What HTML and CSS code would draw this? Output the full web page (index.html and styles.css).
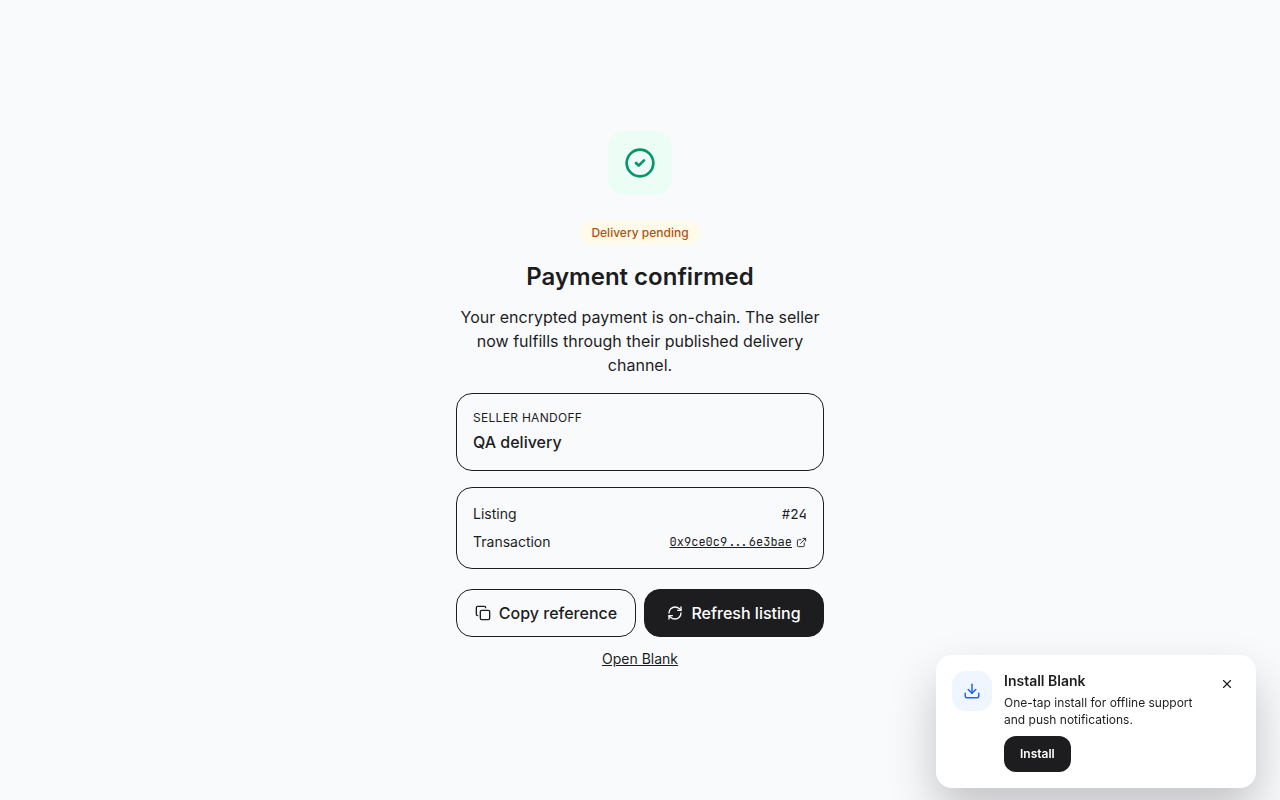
FILE: index.html
```html
<!DOCTYPE html>
<html lang="en">
  <head>
    <meta charset="UTF-8" />
    <meta name="viewport" content="width=device-width, initial-scale=1.0" />
    <title>Payment confirmed</title>
    <link rel="stylesheet" href="styles.css">
  </head>
  <body>
    <main class="page">
      <div class="receipt">
        <div class="status-icon">
          <svg class="icon" width="32" height="32" viewBox="0 0 24 24"><circle cx="12" cy="12" r="10" /><path d="m9 12 2 2 4-4" /></svg>
        </div>
        <span class="badge">Delivery pending</span>
        <h1>Payment confirmed</h1>
        <p class="lead">Your encrypted payment is on-chain. The seller now fulfills through their published delivery channel.</p>

        <section class="card">
          <p class="label">Seller handoff</p>
          <p class="value">QA delivery</p>
        </section>

        <dl class="card details">
          <div class="row">
            <dt>Listing</dt>
            <dd class="mono">#24</dd>
          </div>
          <div class="row">
            <dt>Transaction</dt>
            <dd>
              <a class="tx mono" href="#tx">
                <span>0x9ce0c9...6e3bae</span>
                <svg class="icon" width="11" height="11" viewBox="0 0 24 24"><path d="M15 3h6v6" /><path d="M10 14 21 3" /><path d="M18 13v6a2 2 0 0 1-2 2H5a2 2 0 0 1-2-2V8a2 2 0 0 1 2-2h6" /></svg>
              </a>
            </dd>
          </div>
        </dl>

        <div class="actions">
          <button type="button" class="btn">
            <svg class="icon" width="16" height="16" viewBox="0 0 24 24"><rect width="14" height="14" x="8" y="8" rx="2" /><path d="M4 16c-1.1 0-2-.9-2-2V4c0-1.1.9-2 2-2h10c1.1 0 2 .9 2 2" /></svg>
            Copy reference
          </button>
          <button type="button" class="btn btn-dark">
            <svg class="icon" width="16" height="16" viewBox="0 0 24 24"><path d="M3 12a9 9 0 0 1 9-9 9.75 9.75 0 0 1 6.74 2.74L21 8" /><path d="M21 3v5h-5" /><path d="M21 12a9 9 0 0 1-9 9 9.75 9.75 0 0 1-6.74-2.74L3 16" /><path d="M8 16H3v5" /></svg>
            Refresh listing
          </button>
        </div>
        <a class="home" href="#home">Open Blank</a>
      </div>
    </main>

    <!-- PWA install prompt -->
    <aside class="toast">
      <div class="toast-icon">
        <svg class="icon" width="18" height="18" viewBox="0 0 24 24"><path d="M21 15v4a2 2 0 0 1-2 2H5a2 2 0 0 1-2-2v-4" /><path d="m7 10 5 5 5-5" /><path d="M12 15V3" /></svg>
      </div>
      <div class="toast-body">
        <h2>Install Blank</h2>
        <p>One-tap install for offline support and push notifications.</p>
        <button type="button" class="install">Install</button>
      </div>
      <button type="button" class="close" aria-label="Dismiss">
        <svg class="icon" width="14" height="14" viewBox="0 0 24 24"><path d="M18 6 6 18" /><path d="m6 6 12 12" /></svg>
      </button>
    </aside>
  </body>
</html>
```
FILE: styles.css
```css
* {
  box-sizing: border-box;
  margin: 0;
}
body {
  font-family: Inter, "Liberation Sans", sans-serif;
  font-size: 16px;
  line-height: 24px;
  color: #1d1d1f;
  background: #f9fafc;
}
button {
  font: inherit;
  color: inherit;
  background: none;
  border: 0;
  cursor: pointer;
}
a {
  color: inherit;
}
.icon {
  flex: none;
  fill: none;
  stroke: currentColor;
  stroke-width: 2;
  stroke-linecap: round;
  stroke-linejoin: round;
}
.mono {
  font-family: "JetBrains Mono", "Liberation Mono", monospace;
}

.page {
  min-height: 100vh;
  display: flex;
  align-items: center;
  justify-content: center;
  padding: 24px;
}
.receipt {
  width: 100%;
  max-width: 368px;
  display: flex;
  flex-direction: column;
  align-items: center;
  text-align: center;
}
.status-icon {
  width: 64px;
  height: 64px;
  display: flex;
  align-items: center;
  justify-content: center;
  border-radius: 16px;
  color: #059669;
  background: #ecfdf5;
}
.badge {
  margin-top: 26px;
  padding: 4px 12px;
  border-radius: 12px;
  font-size: 12px;
  line-height: 16px;
  font-weight: 500;
  color: #b45309;
  background: #fffbeb;
}
h1 {
  margin-top: 16px;
  font-size: 24px;
  line-height: 32px;
  font-weight: 600;
}
.lead {
  margin-top: 12px;
}

.card {
  width: 100%;
  margin-top: 16px;
  padding: 16px;
  border: 1px solid #1d1d1f;
  border-radius: 16px;
  text-align: left;
}
.label {
  font-size: 12px;
  line-height: 16px;
  letter-spacing: 0.025em;
  text-transform: uppercase;
}
.value {
  margin-top: 4px;
  font-weight: 500;
}
.details {
  display: grid;
  gap: 8px;
  font-size: 14px;
  line-height: 20px;
}
.row {
  display: flex;
  justify-content: space-between;
}
.tx {
  display: flex;
  align-items: center;
  gap: 4px;
  font-size: 12px;
}

.actions {
  width: 100%;
  margin-top: 20px;
  display: grid;
  grid-template-columns: 1fr 1fr;
  gap: 8px;
}
.btn {
  height: 48px;
  display: flex;
  align-items: center;
  justify-content: center;
  gap: 8px;
  border: 1px solid #1d1d1f;
  border-radius: 16px;
  font-weight: 500;
  white-space: nowrap;
}
.btn-dark {
  color: #fff;
  background: #1d1d1f;
}
.home {
  margin-top: 12px;
  font-size: 14px;
  line-height: 20px;
}

.toast {
  position: fixed;
  right: 24px;
  bottom: 12px;
  width: 320px;
  display: flex;
  align-items: flex-start;
  gap: 12px;
  padding: 16px;
  border-radius: 16px;
  background: #fff;
  box-shadow: 0 24px 48px rgba(0, 0, 0, 0.22);
  will-change: transform;
}
.toast-icon {
  flex: none;
  width: 40px;
  height: 40px;
  display: flex;
  align-items: center;
  justify-content: center;
  border-radius: 14px;
  color: #2563eb;
  background: #eff6ff;
}
.toast-body {
  flex: 1;
}
.toast h2 {
  font-size: 14px;
  line-height: 20px;
  font-weight: 600;
}
.toast p {
  margin-top: 3px;
  font-size: 12px;
  line-height: 17px;
}
.install {
  height: 36px;
  margin-top: 8px;
  padding: 0 16px;
  border-radius: 12px;
  font-size: 12px;
  line-height: 16px;
  font-weight: 600;
  color: #fff;
  background: #1d1d1f;
}
.close {
  width: 26px;
  height: 26px;
  display: flex;
  align-items: center;
  justify-content: center;
  padding: 0;
}
```
